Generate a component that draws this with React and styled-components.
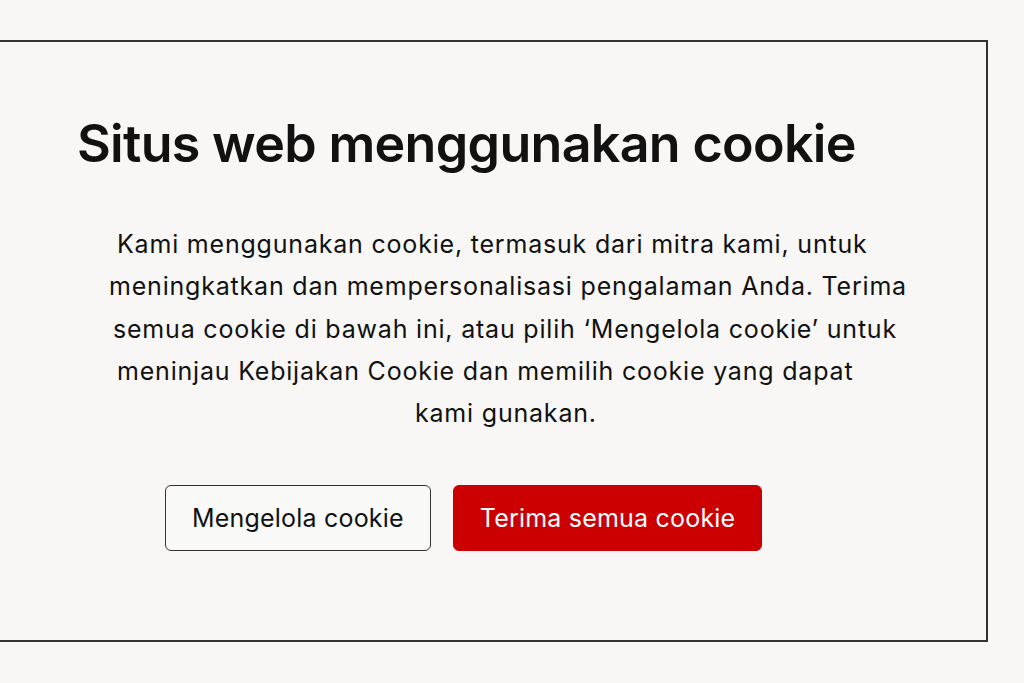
import React from 'react';
import styled, { createGlobalStyle } from 'styled-components';

const GlobalStyle = createGlobalStyle`
  html, body {
    margin: 0;
    padding: 0;
    background: #f8f7f5;
    font-family: Inter, "Noto Sans", "Liberation Sans", sans-serif;
    color: #111111;
  }
`;

const Page = styled.div`
  width: 1024px;
  height: 683px;
  padding-top: 40px;
  box-sizing: border-box;
  overflow: hidden;
`;

const Panel = styled.section`
  width: 988px;
  height: 602px;
  box-sizing: border-box;
  border: 2px solid #333333;
  border-left: none;
  display: flex;
  flex-direction: column;
`;

const Title = styled.h1`
  margin: 70px 0 0 77px;
  font-size: 52px;
  font-weight: 600;
  line-height: 64px;
  letter-spacing: -0.7px;
`;

const Body = styled.div`
  margin-top: 47px;
  display: flex;
  flex-direction: column;
`;

const Line = styled.p`
  margin: 0;
  padding-left: ${({ $indent }) => $indent}px;
  font-size: 25px;
  letter-spacing: 0.8px;
  line-height: 42.3px;
  white-space: nowrap;
`;

const Actions = styled.div`
  margin-top: 51px;
  padding-left: 165px;
  display: flex;
  gap: 22px;
`;

const Button = styled.button`
  height: 66px;
  padding: 0 26px;
  border-radius: 6px;
  font-family: inherit;
  font-size: 25px;
  letter-spacing: 0.2px;
  cursor: pointer;
  border: 1.5px solid ${({ $primary }) => ($primary ? '#cc0000' : '#333333')};
  background: ${({ $primary }) => ($primary ? '#cc0000' : '#f9f9f7')};
  color: ${({ $primary }) => ($primary ? '#ffffff' : '#111111')};
`;

const lines = [
  { text: 'Kami menggunakan cookie, termasuk dari mitra kami, untuk', indent: 117 },
  { text: 'meningkatkan dan mempersonalisasi pengalaman Anda. Terima', indent: 109 },
  { text: 'semua cookie di bawah ini, atau pilih \u2018Mengelola cookie\u2019 untuk', indent: 113 },
  { text: 'meninjau Kebijakan Cookie dan memilih cookie yang dapat', indent: 117 },
  { text: 'kami gunakan.', indent: 415 },
];

export default function App() {
  return (
    <>
      <GlobalStyle />
      <Page>
        <Panel>
          <Title>Situs web menggunakan cookie</Title>
          <Body>
            {lines.map((l) => (
              <Line key={l.text} $indent={l.indent}>
                {l.text}
              </Line>
            ))}
          </Body>
          <Actions>
            <Button>Mengelola cookie</Button>
            <Button $primary>Terima semua cookie</Button>
          </Actions>
        </Panel>
      </Page>
    </>
  );
}
